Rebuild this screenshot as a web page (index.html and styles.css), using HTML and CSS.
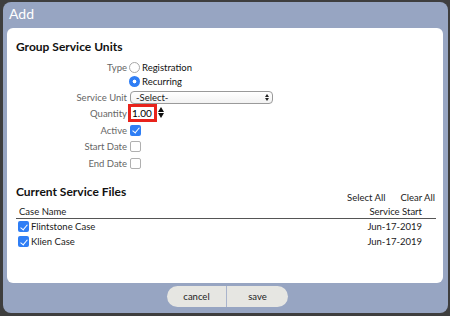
FILE: index.html
```html
<!DOCTYPE html>
<html>
<head>
<meta charset="utf-8">
<link rel="stylesheet" href="styles.css">
</head>
<body>
<div class="dialog">
  <div class="title">Add</div>
  <div class="panel">
    <h2 class="heading">Group Service Units</h2>
    <div class="form">
      <div class="label">Type</div>
      <div class="ctrl"><span class="radio"></span><span class="opt">Registration</span></div>
      <div class="label"></div>
      <div class="ctrl"><span class="radio on"></span><span class="opt">Recurring</span></div>
      <div class="label">Service Unit</div>
      <div class="ctrl"><div class="select"><span>-Select-</span><span class="arrows"><i class="up"></i><i class="down"></i></span></div></div>
      <div class="label">Quantity</div>
      <div class="ctrl"><div class="qty">1.00</div><span class="spin"><i class="up big"></i><i class="down big"></i></span></div>
      <div class="label">Active</div>
      <div class="ctrl"><span class="check on"></span></div>
      <div class="label">Start Date</div>
      <div class="ctrl"><span class="check"></span></div>
      <div class="label">End Date</div>
      <div class="ctrl"><span class="check"></span></div>
    </div>
    <div class="files-head">
      <h2 class="heading">Current Service Files</h2>
      <div class="links"><span>Select All</span><span>Clear All</span></div>
    </div>
    <div class="table">
      <div class="trow thead"><span class="name">Case Name</span><span class="date">Service Start</span></div>
      <div class="trow"><span class="check on"></span><span class="name">Flintstone Case</span><span class="date">Jun-17-2019</span></div>
      <div class="trow"><span class="check on"></span><span class="name">Klien Case</span><span class="date">Jun-17-2019</span></div>
    </div>
  </div>
  <div class="footer">
    <div class="btns"><button class="btn left">cancel</button><button class="btn right">save</button></div>
  </div>
</div>
</body>
</html>
```
FILE: styles.css
```css
html, body { margin: 0; padding: 0; }
body {
  background: #3e3e3e;
  width: 450px;
  height: 316px;
  overflow: hidden;
  font-family: Lato, "Open Sans", sans-serif;
  font-size: 9.5px;
  color: #1a1a1a;
  padding-top: 2px;
  box-sizing: border-box;
}
.dialog {
  margin-left: 3px;
  width: 445px;
  height: 311px;
  background: #97a5c2;
  border-radius: 8px;
  display: flex;
  flex-direction: column;
  box-sizing: border-box;
}
.title {
  height: 26px;
  line-height: 24px;
  padding-left: 6px;
  color: #fff;
  font-size: 14px;
}
.panel {
  margin: 0 5px 0 4px;
  height: 255px;
  background: #fff;
  border-radius: 6px;
  padding: 11px 8px 0 9px;
  box-sizing: border-box;
}
.heading {
  margin: 0;
  font-size: 12px;
  font-weight: 700;
  line-height: 16px;
  height: 16px;
  color: #111;
}
.form {
  margin-top: 5px;
  display: grid;
  grid-template-columns: 111px 1fr;
  grid-template-rows: 14px 15px 16px 17px 16px 17px 17px;
  column-gap: 2px;
}
.label {
  text-align: right;
  color: #666;
  display: flex;
  align-items: center;
  justify-content: flex-end;
}
.ctrl { display: flex; align-items: center; }
.radio {
  width: 11px; height: 11px;
  border: 1px solid #a8a8a8;
  border-radius: 50%;
  box-sizing: border-box;
  margin-right: 2px;
  background: #fff;
}
.radio.on {
  border: none;
  background: radial-gradient(circle, #fff 0 1.6px, #2f7ef5 2.2px);
}
.opt { color: #111; }
.select {
  margin-left: 1px;
  width: 143px; height: 13px;
  border: 1px solid #9a9a9a;
  border-radius: 4px;
  box-sizing: border-box;
  background: linear-gradient(#fff, #f2f2f2);
  display: flex; align-items: center; justify-content: space-between;
  padding: 0 3px 0 5px;
}
.arrows, .spin { display: flex; flex-direction: column; align-items: center; gap: 1px; }
.up, .down { display: block; width: 0; height: 0; border-left: 2px solid transparent; border-right: 2px solid transparent; }
.up { border-bottom: 3px solid #222; }
.down { border-top: 3px solid #222; }
.up.big { border-left-width: 3px; border-right-width: 3px; border-bottom-width: 5px; border-bottom-color: #111; }
.down.big { border-left-width: 3px; border-right-width: 3px; border-top-width: 5px; border-top-color: #111; }
.qty {
  margin-left: -1px;
  width: 29px; height: 18px;
  border: 3px solid #e8231c;
  box-sizing: border-box;
  line-height: 12px;
  padding-left: 1px;
  color: #000;
  font-size: 10px;
  margin-top: -2px;
}
.spin { margin-left: 1px; gap: 1px; margin-top: -2px; }
.check {
  width: 11px; height: 11px;
  border: 1px solid #b0b0b0;
  border-radius: 2px;
  box-sizing: border-box;
  margin-left: 1px;
  background: #fff;
  position: relative;
  flex: none;
}
.check.on {
  border: none;
  background: #2f7ef5;
}
.check.on::after {
  content: "";
  position: absolute;
  left: 3.5px; top: 1.5px;
  width: 3px; height: 6px;
  border-right: 1.5px solid #fff;
  border-bottom: 1.5px solid #fff;
  transform: rotate(40deg);
}
.files-head {
  margin-top: 12px;
  height: 20px;
  display: flex;
  justify-content: space-between;
}
.links {
  align-self: flex-end;
  display: flex;
  gap: 15px;
  line-height: 12px;
}
.table { width: 420px; }
.trow {
  display: flex;
  align-items: center;
  height: 15px;
  padding-left: 1px;
}
.thead {
  height: 14px;
  border-bottom: 1.5px solid #555;
}
.thead .name { margin-left: 13px; }
.trow .name { margin-left: 2px; flex: 1; }
.date { margin-right: 14px; }
.footer {
  flex: 1;
  display: flex;
  justify-content: center;
  padding-top: 3px;
}
.btns { display: flex; height: 21px; margin-left: 4px; }
.btn {
  font-family: Lato, sans-serif;
  font-size: 9.5px;
  color: #222;
  background: #e6e6e2;
  border: none;
  width: 60px;
  height: 21px;
  padding: 0;
}
.btn.left { border-radius: 11px 0 0 11px; border-right: 1px solid #a9b4cc; }
.btn.right { border-radius: 0 11px 11px 0; width: 61px; }
```
